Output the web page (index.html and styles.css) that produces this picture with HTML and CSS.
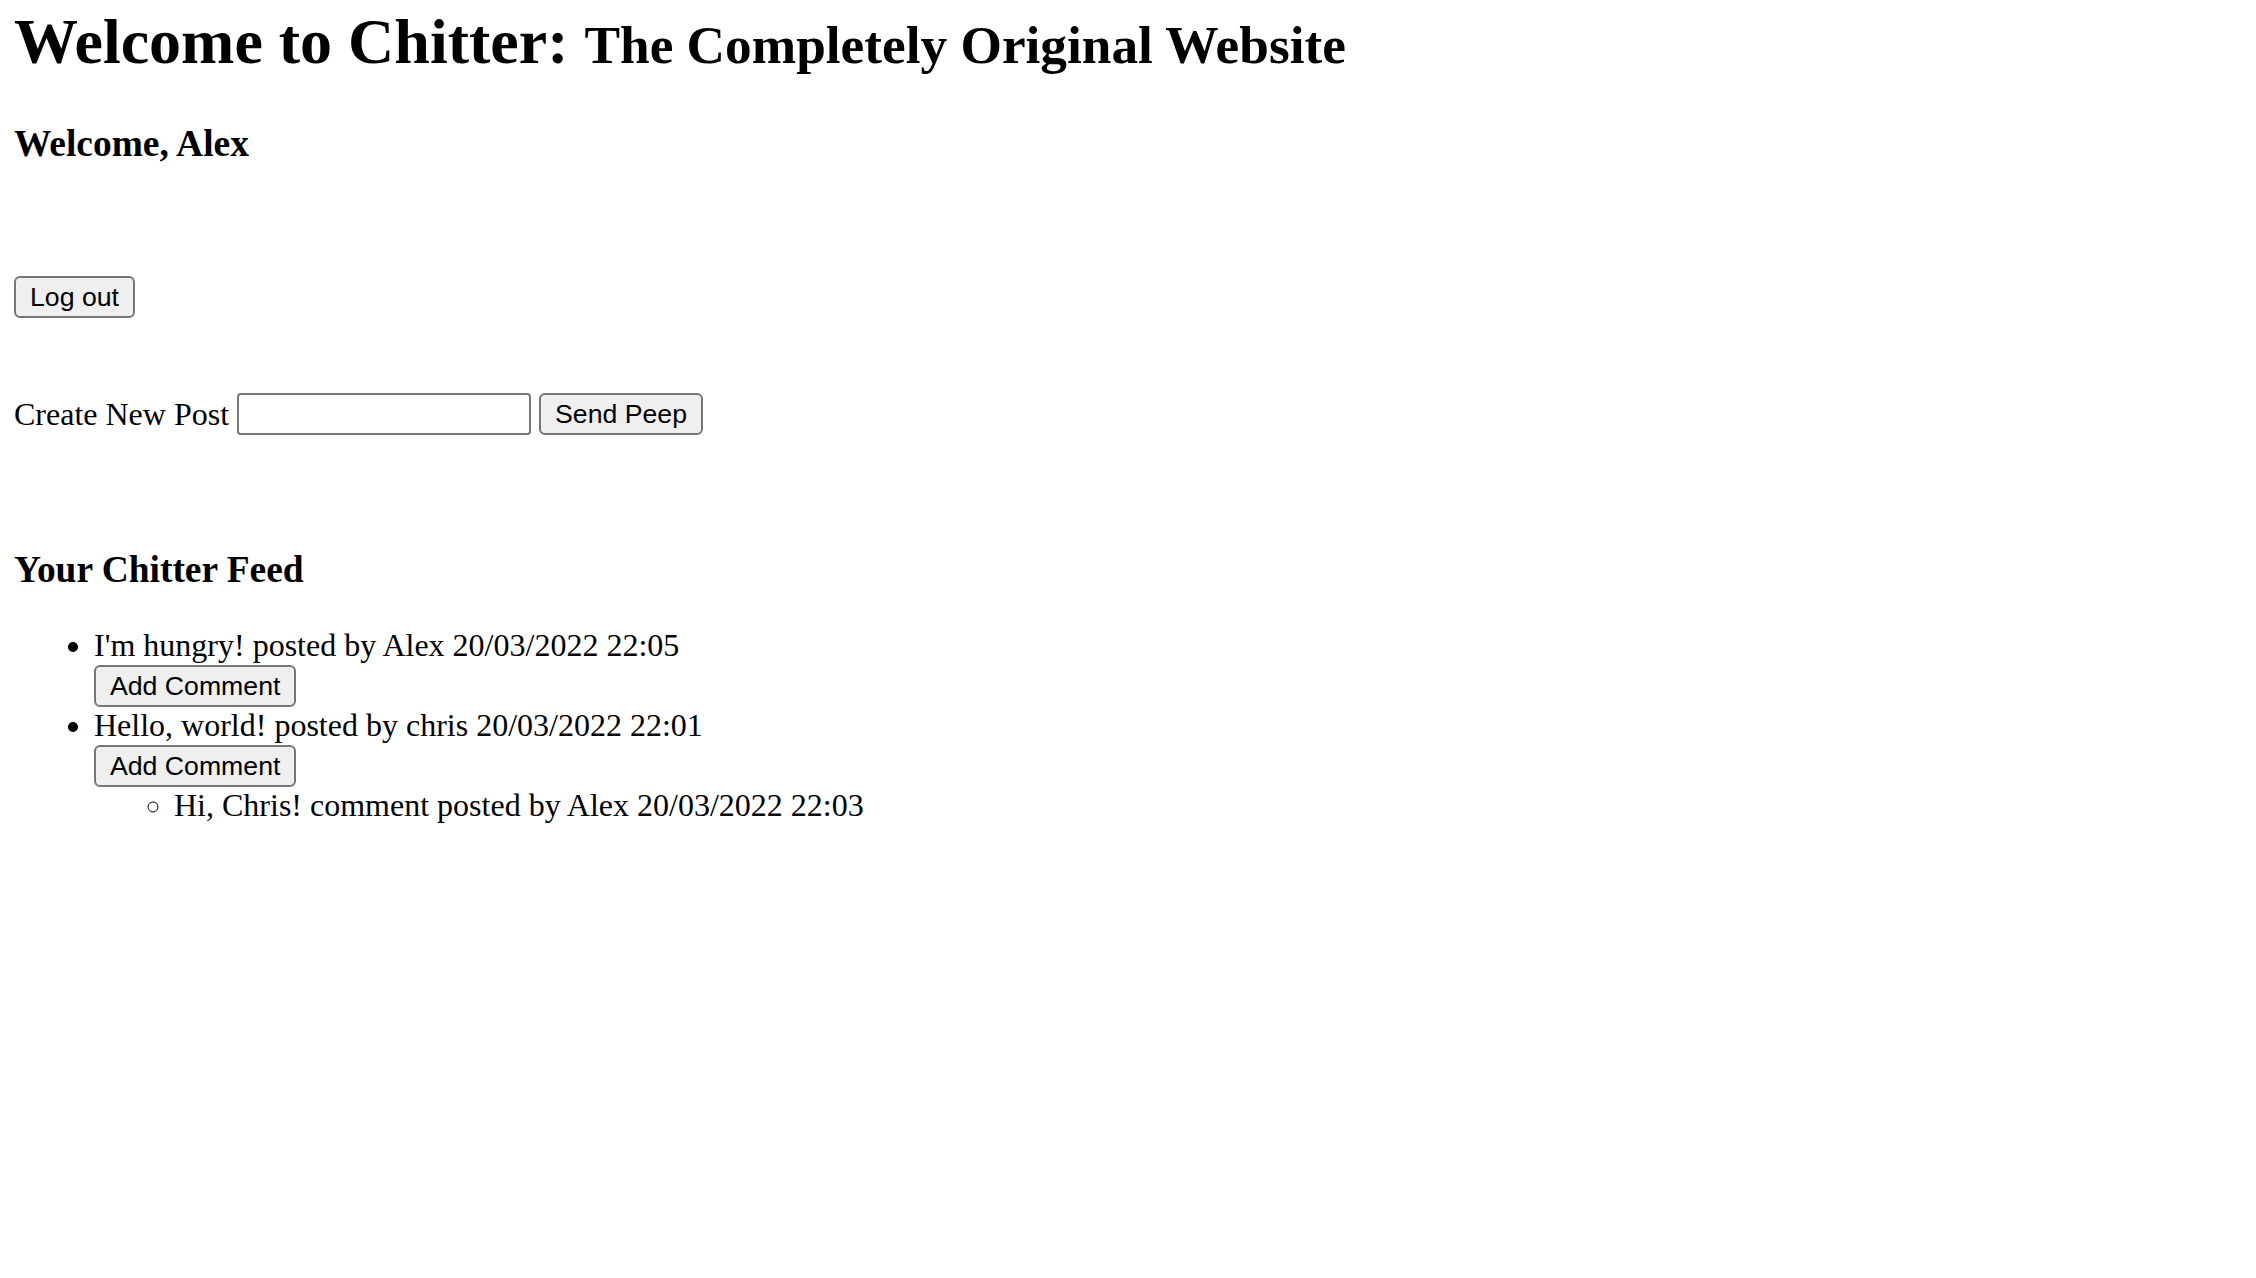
FILE: index.html
```html
<!DOCTYPE html>
<html lang="en">
<head>
<meta charset="utf-8">
<title>Chitter</title>
<link rel="stylesheet" href="styles.css">
</head>
<body>
<h1 class="title">Welcome to Chitter: <span class="subtitle">The Completely Original Website</span></h1>
<h3 class="welcome">Welcome, Alex</h3>
<form class="logout">
  <button type="button" class="btn">Log out</button>
</form>
<form class="new-post">
  <label class="new-post-label" for="peep">Create New Post</label>
  <input id="peep" class="text-input" type="text">
  <button type="button" class="btn">Send Peep</button>
</form>
<h3 class="feed-title">Your Chitter Feed</h3>
<ul class="feed">
  <li class="peep">I'm hungry! posted by Alex 20/03/2022 22:05
    <button type="button" class="btn btn-block">Add Comment</button>
  </li>
  <li class="peep">Hello, world! posted by chris 20/03/2022 22:01
    <button type="button" class="btn btn-block">Add Comment</button>
    <ul class="comments">
      <li class="comment">Hi, Chris! comment posted by Alex 20/03/2022 22:03</li>
    </ul>
  </li>
</ul>
</body>
</html>
```
FILE: styles.css
```css
html {
  background: #ffffff;
}
body {
  margin: 0 14px 16px;
  font-family: "Liberation Serif", "Times New Roman", serif;
  font-size: 32px;
  color: #000;
}
.title {
  margin: 5px 0 0;
  font-size: 64px;
  font-weight: bold;
}
.subtitle {
  font-size: 53.3px;
}
.welcome {
  margin: 43px 0 0;
  font-size: 37.44px;
  font-weight: bold;
}
.logout {
  margin: 111px 0 0;
}
.btn {
  box-sizing: border-box;
  height: 42px;
  padding: 0 14px;
  font-family: "Liberation Sans", Arial, sans-serif;
  font-size: 26.67px;
  color: #000;
  background: #efefef;
  border: 2px solid #767676;
  border-radius: 6px;
}
.logout .btn {
  display: block;
}
.new-post {
  margin: 75px 0 0;
  display: flex;
  align-items: center;
  gap: 8px;
}
.new-post-label {
  margin-right: 0;
}
.text-input {
  box-sizing: border-box;
  width: 294px;
  height: 42px;
  margin: 0;
  padding: 2px 4px;
  font-size: 26.67px;
  border: 2px solid #767676;
  border-radius: 4px;
  background: #fff;
}
.feed-title {
  margin: 113px 0 0;
  font-size: 37.44px;
  font-weight: bold;
}
.feed {
  margin: 36px 0 0;
  padding-left: 80px;
  list-style: disc;
}
.btn-block {
  display: block;
  margin-top: 1px;
}
.comments {
  margin: 0;
  padding-left: 80px;
  list-style: circle;
}
```
